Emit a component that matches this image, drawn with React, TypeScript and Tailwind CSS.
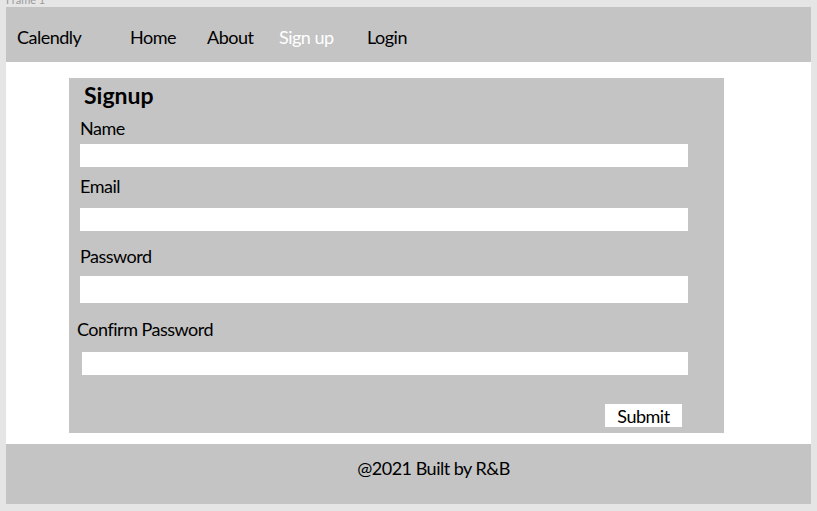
export default function App() {
  const font = { fontFamily: "Lato, 'Open Sans', sans-serif" };

  return (
    <div className="w-[817px] h-[511px] bg-[#e5e5e5] overflow-hidden" style={font}>
      {/* frame label, mostly cut off */}
      <div className="h-[7px] overflow-hidden pl-[6px]">
        <div className="-mt-[6px] text-[11px] leading-[12px] text-[#9a9a9a]">Frame 1</div>
      </div>

      <div className="ml-[6px] w-[805px] h-[497px] bg-white flex flex-col text-black tracking-[-0.5px]">
        {/* nav */}
        <nav className="h-[55px] bg-[#c4c4c4] flex items-start pt-[19px] pl-[11px] text-[18px] leading-[22px]">
          <span className="w-[113px]">Calendly</span>
          <span className="w-[77px]">Home</span>
          <span className="w-[72px]">About</span>
          <span className="w-[88px] text-white">Sign up</span>
          <span>Login</span>
        </nav>

        {/* form panel */}
        <main className="flex-1 pt-[16px] pl-[63px]">
          <form className="w-[655px] h-[355px] bg-[#c4c4c4] flex flex-col pt-[3px]">
            <h1 className="ml-[15px] text-[23px] leading-[28px] font-bold tracking-normal">Signup</h1>

            <label className="ml-[11px] mt-[8px] text-[18px] leading-[22px]">Name</label>
            <input className="ml-[11px] mt-[5px] w-[608px] h-[23px] bg-white outline-none" />

            <label className="ml-[11px] mt-[8px] text-[18px] leading-[22px]">Email</label>
            <input className="ml-[11px] mt-[11px] w-[608px] h-[23px] bg-white outline-none" />

            <label className="ml-[11px] mt-[14px] text-[18px] leading-[22px]">Password</label>
            <input className="ml-[11px] mt-[9px] w-[608px] h-[27px] bg-white outline-none" />

            <label className="ml-[8px] mt-[15px] text-[18px] leading-[22px]">Confirm Password</label>
            <input className="ml-[13px] mt-[12px] w-[606px] h-[23px] bg-white outline-none" />

            <div className="flex justify-end pr-[42px] mt-[29px]">
              <button type="button" className="w-[77px] h-[23px] bg-white text-[18px] leading-[22px]">
                Submit
              </button>
            </div>
          </form>
        </main>

        {/* footer */}
        <footer className="h-[60px] mt-[11px] bg-[#c4c4c4] pt-[13px] pl-[50px] text-center text-[18px] leading-[22px]">
          @2021 Built by R&amp;B
        </footer>
      </div>
    </div>
  );
}
